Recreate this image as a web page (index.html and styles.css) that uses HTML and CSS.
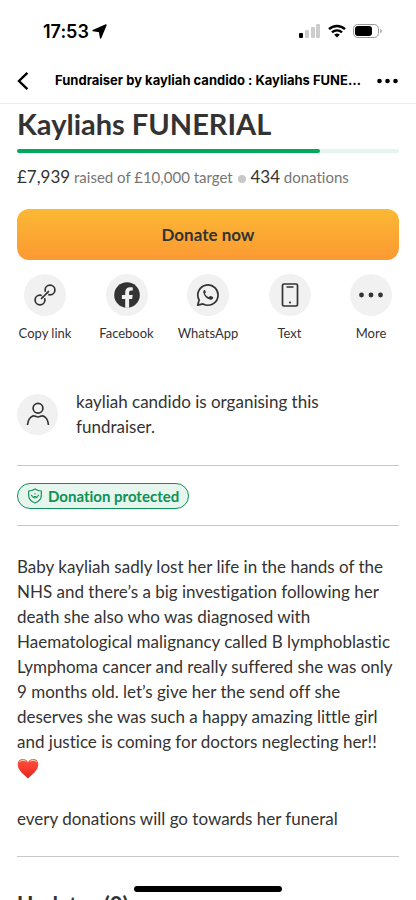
FILE: index.html
```html
<!DOCTYPE html>
<html lang="en-GB">
<head>
<meta charset="utf-8">
<meta name="viewport" content="width=device-width, initial-scale=1">
<title>Fundraiser by kayliah candido : Kayliahs FUNERIAL</title>
<link rel="stylesheet" href="styles.css">
</head>
<body>
<div class="app">
  <div class="status">
    <div class="status-time">17:53
      <svg width="15" height="15" viewBox="0 0 15 15" aria-hidden="true"><path d="M14 1 8.6 14 7.5 7.5 1 6.6Z" fill="#000" stroke="#000" stroke-width="1.4" stroke-linejoin="round"/></svg>
    </div>
    <div class="status-icons">
      <svg width="22" height="14" viewBox="0 0 22 14" aria-hidden="true"><rect x="0" y="9" width="4" height="5" rx="1"/><g fill="#ccc"><rect x="6" y="6" width="4" height="8" rx="1"/><rect x="12" y="3" width="4" height="11" rx="1"/><rect x="17" y="0" width="4" height="14" rx="1"/></g></svg>
      <svg width="18" height="14" viewBox="0 0 18 14" aria-hidden="true"><g fill="none" stroke="#000" stroke-width="2.4"><path d="M1 5.2a11.5 11.5 0 0 1 16 0"/><path d="M4 8.4a7.2 7.2 0 0 1 10 0"/></g><path d="M6.2 10.8a4.2 4.2 0 0 1 5.6 0L9 13.6Z"/></svg>
      <svg width="29" height="14" viewBox="0 0 29 14" aria-hidden="true"><rect x=".5" y=".5" width="25" height="13" rx="4.2" fill="none" stroke="#999"/><rect x="2" y="2" width="17" height="10" rx="3"/><path d="M27.3 4.8v4.4q1.5-.7 1.5-2.2t-1.5-2.2Z" fill="#999"/></svg>
    </div>
  </div>
  <header class="nav">
    <button class="nav-button" aria-label="Back"><svg width="12" height="20" viewBox="0 0 12 20"><path d="M10.400 1.800 2 10l8.400 8.200" fill="none" stroke="#000" stroke-width="2.400"/></svg></button>
    <div class="nav-title">Fundraiser by kayliah candido : Kayliahs FUNE…</div>
    <button class="nav-button" aria-label="Options"><svg width="21" height="6" viewBox="0 0 21 6"><circle cx="2.500" cy="3" r="2.300"/><circle cx="10.500" cy="3" r="2.300"/><circle cx="18.500" cy="3" r="2.300"/></svg></button>
  </header>
  <main class="content">
    <h1>Kayliahs FUNERIAL</h1>
    <div class="progress" role="progressbar" aria-label="Raised" aria-valuenow="79" aria-valuemin="0" aria-valuemax="100"><div class="progress-fill" style="width:79.39%"></div></div>
    <p class="stats"><span class="amount">£7,939</span> raised of £10,000 target <span class="dot"></span> <span class="amount">434</span> donations</p>
    <button class="donate">Donate now</button>
    <div class="share">
      <button class="share-item"><span class="disc"><svg width="24" height="24" viewBox="0 0 24 24" fill="none" stroke="#333" stroke-width="1.700" stroke-linecap="round"><circle cx="17" cy="7" r="4.900"/><circle cx="7" cy="17" r="4.900"/><path d="m10 14 4-4" stroke="#f1f1f1" stroke-width="4" stroke-linecap="butt"/><path d="m8.500 15.500 7-7"/></svg></span><span>Copy link</span></button>
      <button class="share-item"><span class="disc"><svg width="26" height="26" viewBox="0 0 26 26"><circle cx="13" cy="13" r="12.800" fill="#333"/><path d="M11.200 25.800v-8.900H7.900v-3.800h3.300v-2.800c0-3.300 1.900-5.100 4.900-5.100 1.400 0 2.700.2 2.700.2v3.200h-1.600c-1.600 0-2.100 1-2.100 2v2.500h3.600l-.6 3.800h-3v8.900Z" fill="#f1f1f1"/></svg></span><span>Facebook</span></button>
      <button class="share-item"><span class="disc"><svg width="24" height="24" viewBox="0 0 24 24"><path d="M1.700 22.200 3.100 17A10.100 10.100 0 1 1 7 20.900Z" fill="none" stroke="#333" stroke-width="1.700" stroke-linejoin="round"/><path d="M8.300 7c-.8.700-1.200 1.700-.9 2.900.9 3.300 3.300 5.800 6.600 6.700 1.400.3 2.700-.3 3.100-1.700v-.8l-2.500-1.200-.7.200-1 1.200c-2-.8-3.300-2.100-4-3.700l.9-1.200v-.7L8.900 7Z" fill="#333"/></svg></span><span>WhatsApp</span></button>
      <button class="share-item"><span class="disc"><svg width="18" height="24" viewBox="0 0 18 24"><rect x="1.500" y="1" width="15" height="22" rx="1.500" fill="none" stroke="#333" stroke-width="1.700"/><path d="M6 4h6" stroke="#333" stroke-width="1.500" stroke-linecap="round"/><circle cx="9" cy="19.500" r="1.100" fill="#333"/></svg></span><span>Text</span></button>
      <button class="share-item"><span class="disc"><svg width="24" height="6" viewBox="0 0 24 6" fill="#333"><circle cx="2.500" cy="3" r="2.400"/><circle cx="12" cy="3" r="2.400"/><circle cx="21.500" cy="3" r="2.400"/></svg></span><span>More</span></button>
    </div>
    <section class="organiser">
      <span class="avatar"><svg width="24" height="24" viewBox="0 0 24 24" fill="none" stroke="#333" stroke-width="1.700"><circle cx="12" cy="6.200" r="4.900"/><path d="M1.500 23c.4-4.500 2.700-8.500 5.700-9.200 1.700-.2 2.800 1.200 4.800 1.200s3.100-1.400 4.800-1.200c3 .7 5.300 4.700 5.700 9.200"/></svg></span>
      <p>kayliah candido is organising this fundraiser.</p>
    </section>
    <div class="protection"><a class="badge" href="#protected"><svg width="16" height="16" viewBox="0 0 16 16" fill="none" stroke="#0e9154" stroke-width="1.200"><path d="M8 1Q5 3 1.700 3v4.500C1.700 11 4 13.500 8 15c4-1.500 6.300-4 6.300-7.500V3Q11 3 8 1Z" stroke-linejoin="round"/><path d="M4.500 7.200Q5 10 8 10t3.500-2.800M4 7.300h1.400m5.200 0H12M8 5v1.500M6.500 8.500h3" stroke-width="1"/></svg>Donation protected</a></div>
    <article class="story">
      <p>Baby kayliah sadly lost her life in the hands of the NHS and there’s a big investigation following her death she also who was diagnosed with Haematological malignancy called B lymphoblastic Lymphoma cancer and really suffered she was only 9 months old. let’s give her the send off she deserves she was such a happy amazing little girl and justice is coming for doctors neglecting her!!<br><svg class="heart" width="22" height="21" viewBox="0 0 22 21" role="img" aria-label="Red heart"><defs><linearGradient id="red" x2="0" y2="1"><stop offset="0" stop-color="#ef5145"/><stop offset=".4" stop-color="#fc3f32"/><stop offset="1" stop-color="#dc2518"/></linearGradient></defs><path d="M11 20.500C8 17 .7 13 .7 6.500c0-3.300 2.300-5.500 5-5.500C8.500 1 10.200 2.500 11 4.500 11.800 2.500 13.500 1 16.300 1c2.700 0 5 2.200 5 5.500C21.300 13 14 17 11 20.500Z" fill="url(#red)"/><path d="M2 4.500C3 1.500 7.500.7 9.500 3.800 7.500 2.800 4.500 2.800 2 4.500Zm10.500-.7c2-3.100 6.500-2.300 7.500.7-2.500-1.700-5.500-1.700-7.500-.7Z" fill="#f5c9a0"/></svg></p>
      <p>every donations will go towards her funeral</p>
    </article>
    <h2>Updates (0)</h2>
  </main>
  <div class="home-indicator"></div>
</div>
</body>
</html>
```

FILE: styles.css
```css
* { box-sizing: border-box; }
body { margin: 0; background: #fff; color: #333; font: 17px/25px Lato, "Liberation Sans", sans-serif; font-variant-ligatures: none; }
button { border: 0; padding: 0; background: none; color: inherit; font: inherit; font-variant-ligatures: none; }
h1, h2, p { margin: 0; }
svg { display: block; flex: none; }
.app { height: 100vh; overflow: hidden; }
.status { display: flex; justify-content: space-between; align-items: center; height: 58px; padding: 4px 34px 0 43px; }
.status-time { display: flex; align-items: center; gap: 3px; color: #000; font-family: Inter, sans-serif; font-size: 18px; font-weight: 600; }
.status-icons { display: flex; align-items: center; gap: 7px; }
.nav { display: flex; align-items: center; justify-content: space-between; height: 46px; padding: 0 18px 0 17px; border-bottom: 1px solid #eee; }
.nav-button { display: flex; align-items: center; flex: none; height: 44px; }
.nav-title { margin-left: 10px; color: #000; font-family: Inter, sans-serif; font-size: 13px; font-weight: 700; white-space: nowrap; }
.content { padding: 0 17px; }
h1 { padding-top: 3px; font-size: 29px; line-height: 34px; font-weight: 700; }
.progress { height: 4px; margin-top: 8px; border-radius: 2px; background: #e5f5ed; }
.progress-fill { height: 100%; border-radius: 2px; background: #02a95c; }
.stats { height: 25px; margin-top: 11px; color: #767676; font-size: 15px; }
.amount { color: #333; font-size: 17px; }
.dot { display: inline-block; width: 8px; height: 8px; margin: 0 1px; border-radius: 50%; background: #c8c8c8; }
.donate { display: block; width: 100%; height: 51px; margin-top: 20px; border-radius: 12px; background: linear-gradient(#fcb834, #fb9932); font-weight: 700; }
.share { display: flex; justify-content: space-between; margin-top: 14px; }
.share-item { display: flex; flex-direction: column; align-items: center; gap: 7px; width: 56px; font-size: 13px; line-height: 20px; white-space: nowrap; }
.disc, .avatar { display: flex; align-items: center; justify-content: center; flex: none; width: 42px; height: 42px; border-radius: 50%; background: #f1f1f1; }
.organiser { display: flex; align-items: center; gap: 18px; margin-top: 46px; padding-bottom: 26px; border-bottom: 1px solid #c8c8c8; }
.organiser p { max-width: 280px; }
.avatar { width: 41px; height: 41px; }
.protection { display: flex; padding: 17px 0 16px; border-bottom: 1px solid #c8c8c8; }
.badge { display: flex; align-items: center; gap: 5px; height: 26px; padding: 0 9px; border: 1px solid #0e9154; border-radius: 13px; background: #e6f5ed; color: #0e9154; font-size: 15px; font-weight: 700; text-decoration: none; }
.story { padding: 28px 0 25px; border-bottom: 1px solid #c8c8c8; }
.story p + p { margin-top: 27px; }
.heart { display: inline-block; vertical-align: middle; }
h2 { margin-top: 32px; font-size: 22px; line-height: 32px; font-weight: 700; }
.home-indicator { position: fixed; bottom: 8px; left: 50%; width: 148px; height: 6px; margin-left: -74px; border-radius: 3px; background: #000; }
```
